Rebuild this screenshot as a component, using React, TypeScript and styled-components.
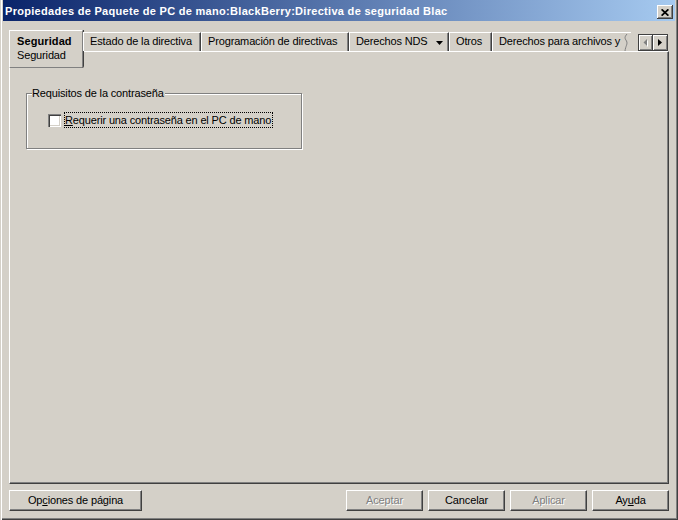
import React from "react";
import styled, { createGlobalStyle } from "styled-components";

const GlobalStyle = createGlobalStyle`
  html, body { margin: 0; padding: 0; background: #d4d0c8; }
  body {
    font-family: "Liberation Sans", Arial, sans-serif;
    font-size: 11px;
    letter-spacing: -0.15px;
    color: #000;
  }
  * { box-sizing: border-box; }
`;

const Window = styled.div`
  width: 678px;
  height: 520px;
  display: flex;
  flex-direction: column;
  background: #d4d0c8;
  padding: 0 3px 3px 3px;
  box-shadow: inset 1px 0 0 #d4d0c8, inset 2px 0 0 #ffffff,
    inset -1px -1px 0 #404040, inset -2px -2px 0 #808080;
`;

const TitleBar = styled.div`
  flex: none;
  height: 21px;
  display: flex;
  align-items: center;
  justify-content: space-between;
  padding: 0 2px;
  background: linear-gradient(to right, #0a246a, #a6caf0);
`;

const TitleText = styled.span`
  color: #fff;
  font-weight: bold;
  letter-spacing: 0.3px;
  white-space: nowrap;
  padding-top: 1px;
`;

const CloseButton = styled.div`
  width: 16px;
  height: 14px;
  margin-top: 3px;
  display: flex;
  align-items: center;
  justify-content: center;
  background: #d4d0c8;
  box-shadow: inset -1px -1px 0 #404040, inset 1px 1px 0 #ffffff,
    inset -2px -2px 0 #808080;
`;

const Body = styled.div`
  flex: 1;
  display: flex;
  flex-direction: column;
  padding: 9px 6px 6px 6px;
`;

const TabRow = styled.div`
  position: relative;
  z-index: 1;
  flex: none;
  height: 21px;
  display: flex;
  align-items: flex-start;
`;

const ActiveTab = styled.div`
  width: 74px;
  height: 38px;
  padding: 3px 0 0 7px;
  background: #d4d0c8;
  border-left: 1px solid #fff;
  border-top: 1px solid #fff;
  border-right: 1px solid #808080;
  border-bottom: 1px solid #808080;
  border-bottom-right-radius: 2px;
  box-shadow: 1px 0 0 #404040;
  line-height: 14px;
  white-space: nowrap;
`;

const Bold = styled.div`
  font-weight: bold;
  letter-spacing: 0.1px;
`;

const Tab = styled.div<{ $w: number; $clipped?: boolean }>`
  flex: none;
  width: ${(p) => p.$w}px;
  height: 19px;
  margin-top: 2px;
  padding: 1px 0 0 6px;
  display: flex;
  align-items: flex-start;
  border-top: 1px solid #fff;
  border-left: 1px solid #fff;
  border-right: ${(p) => (p.$clipped ? "none" : "1px solid #404040")};
  box-shadow: ${(p) => (p.$clipped ? "none" : "inset -1px 0 0 #808080")};
  line-height: 14px;
  white-space: nowrap;
  overflow: hidden;
`;

const TabLabel = styled.span`
  flex: none;
`;

const ScrollGroup = styled.div`
  margin-left: auto;
  margin-right: 1px;
  margin-top: 4px;
  height: 17px;
  display: flex;
`;

const ScrollButton = styled.div<{ $first?: boolean }>`
  width: 15px;
  height: 17px;
  display: flex;
  align-items: center;
  justify-content: center;
  background: #d4d0c8;
  border: 1px solid #404040;
  border-left: ${(p) => (p.$first ? "1px solid #404040" : "none")};
  box-shadow: inset 1px 1px 0 #fff, inset -1px -1px 0 #808080;
`;

const Panel = styled.div`
  flex: 1;
  border-top: 1px solid #fff;
  border-left: 1px solid #fff;
  border-right: 1px solid #404040;
  border-bottom: 1px solid #404040;
  box-shadow: inset -1px -1px 0 #808080;
  padding: 41px 0 0 16px;
`;

const GroupBox = styled.div`
  position: relative;
  width: 276px;
  height: 56px;
  border: 1px solid #808080;
  box-shadow: inset 1px 1px 0 #fff, 1px 1px 0 #fff;
  padding: 18px 0 0 21px;
`;

const GroupLegend = styled.span`
  position: absolute;
  top: -7px;
  left: 5px;
  padding-right: 1px;
  background: #d4d0c8;
  line-height: 13px;
  white-space: nowrap;
`;

const CheckRow = styled.div`
  display: flex;
  align-items: center;
  gap: 3px;
`;

const CheckBox = styled.div`
  width: 13px;
  height: 13px;
  background: #fff;
  box-shadow: inset 1px 1px 0 #808080, inset 2px 2px 0 #404040,
    inset -1px -1px 0 #fff, inset -2px -2px 0 #d4d0c8;
`;

const CheckLabel = styled.span`
  height: 16px;
  line-height: 14px;
  border: 1px dotted #000;
  padding: 0 1px 0 0;
  white-space: nowrap;
`;

const ButtonRow = styled.div`
  flex: none;
  margin-top: 6px;
  height: 21px;
  display: flex;
  gap: 5px;
`;

const Spacer = styled.div`
  flex: 1;
`;

const Button = styled.button<{ $w: number }>`
  width: ${(p) => p.$w}px;
  height: 21px;
  padding: 0;
  margin: 0;
  font-family: inherit;
  font-size: 11px;
  letter-spacing: inherit;
  line-height: 19px;
  color: ${(p) => (p.disabled ? "#808080" : "#000")};
  text-shadow: ${(p) => (p.disabled ? "1px 1px 0 #fff" : "none")};
  background: #d4d0c8;
  border-style: solid;
  border-width: 1px;
  border-color: #fff #404040 #404040 #fff;
  border-radius: 0;
  box-shadow: inset -1px -1px 0 #808080;
  white-space: nowrap;
  cursor: default;
`;

const Mn = styled.span`
  text-decoration: underline;
`;

const CloseIcon = () => (
  <svg width="8" height="7" viewBox="0 0 8 7">
    <path d="M0.6 0.3 L7.4 6.7 M7.4 0.3 L0.6 6.7" stroke="#000" strokeWidth="1.7" />
  </svg>
);

const DownArrow = () => (
  <svg width="7" height="4" viewBox="0 0 7 4" style={{ margin: "7px 0 0 8px", flex: "none" }}>
    <path d="M0 0 H7 L3.5 4 Z" fill="#000" />
  </svg>
);

const Squiggle = () => (
  <svg width="6" height="17" viewBox="0 0 6 17" style={{ flex: "none", marginLeft: "3px" }}>
    <path d="M4 0 C1.5 3 1.5 4 3.5 7 C5 10 2.5 12 2 17" stroke="#808080" strokeWidth="1" fill="none" />
  </svg>
);

const LeftArrow = () => (
  <svg width="5" height="8" viewBox="0 0 5 8">
    <path d="M5 1 L5 8 L1.5 4.5 Z" fill="#fff" />
    <path d="M4 0 L4 7 L0.5 3.5 Z" fill="#808080" />
  </svg>
);

const RightArrow = () => (
  <svg width="4" height="7" viewBox="0 0 4 7">
    <path d="M0 0 L0 7 L4 3.5 Z" fill="#000" />
  </svg>
);

export default function App() {
  return (
    <>
      <GlobalStyle />
      <Window>
        <TitleBar>
          <TitleText>
            Propiedades de Paquete de PC de mano:BlackBerry:Directiva de seguridad Blac
          </TitleText>
          <CloseButton>
            <CloseIcon />
          </CloseButton>
        </TitleBar>
        <Body>
          <TabRow>
            <ActiveTab>
              <Bold>Seguridad</Bold>
              <div>Seguridad</div>
            </ActiveTab>
            <Tab $w={118}>
              <TabLabel>Estado de la directiva</TabLabel>
            </Tab>
            <Tab $w={148}>
              <TabLabel>Programación de directivas</TabLabel>
            </Tab>
            <Tab $w={100}>
              <TabLabel>Derechos NDS</TabLabel>
              <DownArrow />
            </Tab>
            <Tab $w={43}>
              <TabLabel>Otros</TabLabel>
            </Tab>
            <Tab $w={139} $clipped>
              <TabLabel>Derechos para archivos y</TabLabel>
              <Squiggle />
            </Tab>
            <ScrollGroup>
              <ScrollButton $first>
                <LeftArrow />
              </ScrollButton>
              <ScrollButton>
                <RightArrow />
              </ScrollButton>
            </ScrollGroup>
          </TabRow>
          <Panel>
            <GroupBox>
              <GroupLegend>Requisitos de la contraseña</GroupLegend>
              <CheckRow>
                <CheckBox />
                <CheckLabel>
                  <Mn>R</Mn>equerir una contraseña en el PC de mano
                </CheckLabel>
              </CheckRow>
            </GroupBox>
          </Panel>
          <ButtonRow>
            <Button $w={133}>
              Op<Mn>c</Mn>iones de página
            </Button>
            <Spacer />
            <Button $w={77} disabled>
              Aceptar
            </Button>
            <Button $w={77}>Cancelar</Button>
            <Button $w={77} disabled>
              Aplicar
            </Button>
            <Button $w={77}>
              Ay<Mn>u</Mn>da
            </Button>
          </ButtonRow>
        </Body>
      </Window>
    </>
  );
}
